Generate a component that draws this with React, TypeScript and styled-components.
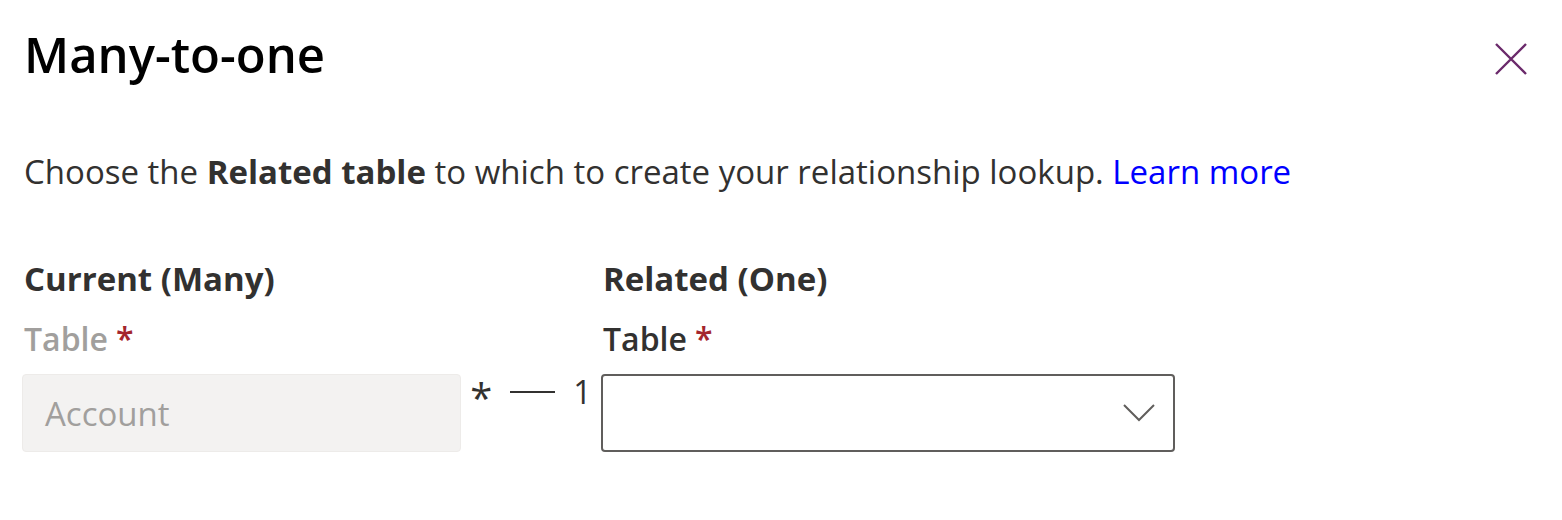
import styled, { createGlobalStyle } from "styled-components";

const GlobalStyle = createGlobalStyle`
  body {
    margin: 0;
    background: #ffffff;
    font-family: "Open Sans", "Noto Sans", sans-serif;
    color: #323130;
  }
`;

const Panel = styled.div`
  width: 1562px;
  height: 520px;
  box-sizing: border-box;
  padding: 20px 24px 0 24px;
  background: #fff;
`;

const Header = styled.header`
  display: flex;
  align-items: flex-start;
  justify-content: space-between;
`;

const Title = styled.h1`
  margin: 0;
  font-size: 49px;
  font-weight: 600;
  color: #000;
  line-height: 68px;
`;

const CloseButton = styled.button`
  border: none;
  background: none;
  padding: 0;
  margin: 22px 10px 0 0;
  width: 34px;
  height: 34px;
  display: flex;
  align-items: center;
  justify-content: center;
  cursor: pointer;
`;

const Intro = styled.p`
  margin: 62px 0 0 0;
  font-size: 33px;
  line-height: 44px;
  color: #323130;
  b {
    font-weight: 700;
  }
`;

const LearnMore = styled.a`
  color: #0000ff;
  text-decoration: none;
`;

const Form = styled.div`
  margin-top: 63px;
  margin-left: -2px;
  display: grid;
  grid-template-columns: 439px 140px 574px;
  grid-template-rows: auto auto auto;
`;

const SectionTitle = styled.div`
  font-size: 33px;
  font-weight: 700;
  line-height: 44px;
  color: #323130;
  padding-left: 2px;
`;

const Label = styled.div<{ $disabled?: boolean }>`
  margin-top: 16px;
  margin-bottom: 13px;
  font-size: 32px;
  font-weight: 600;
  line-height: 44px;
  padding-left: 2px;
  color: ${(p) => (p.$disabled ? "#a19f9d" : "#323130")};
`;

const Required = styled.span`
  color: #a4262c;
  margin-left: 8px;
`;

const Field = styled.div<{ $disabled?: boolean }>`
  height: 78px;
  box-sizing: border-box;
  border-radius: 4px;
  display: flex;
  align-items: center;
  justify-content: space-between;
  padding: 0 18px 0 22px;
  font-size: 33px;
  background: ${(p) => (p.$disabled ? "#f3f2f1" : "#fff")};
  border: ${(p) => (p.$disabled ? "1px solid #edebe9" : "2px solid #605e5c")};
  color: #a19f9d;
`;

const Connector = styled.div`
  display: flex;
  align-items: flex-start;
  justify-content: center;
  gap: 18px;
  font-size: 32px;
  line-height: 44px;
  color: #323130;
  margin-top: -4px;
`;

const Star = styled.span`
  font-size: 40px;
  line-height: 56px;
`;

const Dash = styled.span`
  display: block;
  width: 45px;
  height: 2px;
  margin-top: 21px;
  background: #323130;
`;

function App() {
  return (
    <>
      <GlobalStyle />
      <Panel>
        <Header>
          <Title>Many-to-one</Title>
          <CloseButton aria-label="Close">
            <svg width="34" height="34" viewBox="0 0 34 34">
              <path
                d="M2 2 L32 32 M32 2 L2 32"
                stroke="#6b2a6b"
                strokeWidth="2.4"
                fill="none"
              />
            </svg>
          </CloseButton>
        </Header>
        <Intro>
          Choose the <b>Related table</b> to which to create your relationship
          lookup. <LearnMore href="#">Learn more</LearnMore>
        </Intro>
        <Form>
          <SectionTitle>Current (Many)</SectionTitle>
          <div />
          <SectionTitle>Related (One)</SectionTitle>

          <Label $disabled>
            Table<Required>*</Required>
          </Label>
          <div />
          <Label>
            Table<Required>*</Required>
          </Label>

          <Field $disabled>Account</Field>
          <Connector>
            <Star>*</Star>
            <Dash />
            <span>1</span>
          </Connector>
          <Field>
            <span />
            <svg width="32" height="18" viewBox="0 0 32 18">
              <path
                d="M1 1 L16 16 L31 1"
                stroke="#605e5c"
                strokeWidth="2"
                fill="none"
              />
            </svg>
          </Field>
        </Form>
      </Panel>
    </>
  );
}

export default App;
